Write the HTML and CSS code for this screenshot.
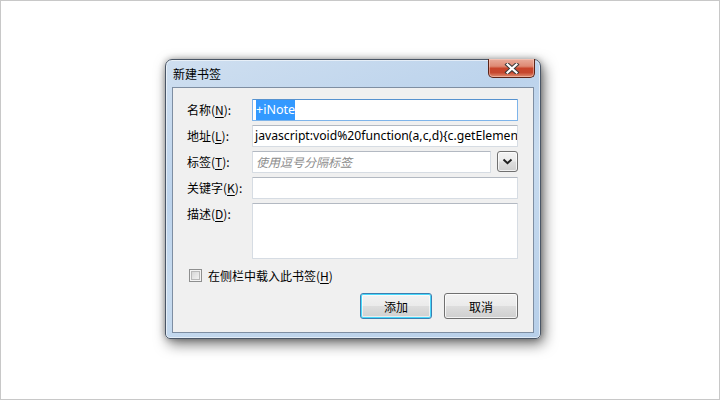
FILE: index.html
```html
<!DOCTYPE html>
<html>
<head>
<meta charset="utf-8">
<link rel="stylesheet" href="styles.css">
</head>
<body>
<div class="stage">
  <div class="window">
    <div class="titlebar">
      <span class="title">新建书签</span>
      <div class="close">
        <svg width="16" height="11" viewBox="0 0 16 11">
          <path d="M3.5 1.5 L12.5 9.5 M12.5 1.5 L3.5 9.5" stroke="#3a3a3a" stroke-width="4.2" stroke-linecap="square" fill="none"/>
          <path d="M3.5 1.5 L12.5 9.5 M12.5 1.5 L3.5 9.5" stroke="#ffffff" stroke-width="2.2" stroke-linecap="square" fill="none"/>
        </svg>
      </div>
    </div>
    <div class="client">
      <div class="form">
        <label class="lbl">名称(<u>N</u>):</label>
        <div class="field focus"><span class="sel">+iNote</span></div>
        <label class="lbl">地址(<u>L</u>):</label>
        <div class="field url">javascript:void%20function(a,c,d){c.getElemen</div>
        <label class="lbl">标签(<u>T</u>):</label>
        <div class="tagrow">
          <div class="field tags"><span class="ph">使用逗号分隔标签</span></div>
          <div class="drop">
            <svg width="11" height="7" viewBox="0 0 11 7"><path d="M1.5 1.5 L5.5 5.2 L9.5 1.5" stroke="#1e1e1e" stroke-width="2" fill="none"/></svg>
          </div>
        </div>
        <label class="lbl">关键字(<u>K</u>):</label>
        <div class="field"></div>
        <label class="lbl">描述(<u>D</u>):</label>
        <div class="field area"></div>
      </div>
      <div class="check">
        <span class="box"></span>
        <span class="clabel">在侧栏中载入此书签(<u>H</u>)</span>
      </div>
      <div class="buttons">
        <div class="btn default">添加</div>
        <div class="btn">取消</div>
      </div>
    </div>
  </div>
</div>
</body>
</html>
```
FILE: styles.css
```css
html, body {
  margin: 0;
  padding: 0;
}
body {
  width: 720px;
  height: 400px;
  box-sizing: border-box;
  border: 1px solid #c8c8c8;
  background: #ffffff;
  font-family: "Noto Sans CJK SC", "Noto Sans", sans-serif;
  font-size: 12px;
  color: #000;
  overflow: hidden;
}
.stage {
  padding-top: 58px;
  padding-left: 164px;
}
.window {
  width: 376px;
  height: 280px;
  box-sizing: border-box;
  border: 1px solid #4a5666;
  border-radius: 7px 7px 5px 5px;
  background: linear-gradient(160deg, #cfdff0 0%, #bcd3ec 35%, #c7dbef 55%, #b7cfe9 100%);
  box-shadow: 3px 5px 14px rgba(0,0,0,0.55), 0 0 6px rgba(0,0,0,0.3), inset 0 0 0 1px rgba(255,255,255,0.55);
  display: flex;
  flex-direction: column;
  padding: 0 6px 5px 6px;
}
.titlebar {
  height: 27px;
  display: flex;
  align-items: flex-start;
  justify-content: space-between;
}
.title {
  margin-top: 5px;
  margin-left: 1px;
  font-size: 12px;
  color: #000;
}
.close {
  width: 47px;
  height: 19px;
  box-sizing: border-box;
  margin-top: -1px;
  margin-right: -1px;
  border: 1px solid #5b2418;
  border-top: none;
  border-radius: 0 0 5px 5px;
  background: linear-gradient(to bottom, #e9ab9a 0%, #de8a74 40%, #c8452b 52%, #c6472e 75%, #e08f72 100%);
  box-shadow: inset 0 0 0 1px rgba(255,220,210,0.45);
  display: flex;
  align-items: center;
  justify-content: center;
}
.client {
  flex: 1;
  border: 1px solid #7e8ea2;
  background: #f0f0f0;
  padding: 11px 15px 0 13px;
  display: flex;
  flex-direction: column;
}
.form {
  display: grid;
  grid-template-columns: 66px 266px;
  grid-template-rows: 22px 22px 22px 22px 56px;
  row-gap: 4px;
}
.lbl {
  line-height: 22px;
  white-space: nowrap;
  margin-left: 1px;
}
u {
  text-decoration: underline;
  text-underline-offset: 2px;
}
.field {
  box-sizing: border-box;
  height: 100%;
  background: #ffffff;
  border: 1px solid #d6dce3;
  border-top-color: #b3b9c2;
  border-radius: 1px;
  padding: 0 3px;
  font-family: "Noto Sans", "Noto Sans CJK SC", sans-serif;
  font-size: 12px;
  line-height: 20px;
  white-space: nowrap;
  overflow: hidden;
}
.field.url {
  font-size: 12.2px;
  padding-left: 2px;
}
.field.focus {
  border-color: #7eb4ea;
  border-top-color: #5692cf;
}
.sel {
  background: #3399ff;
  color: #fff;
  padding: 1px 0 2px 0;
  font-size: 12.5px;
}
.tagrow {
  display: flex;
  gap: 6px;
}
.field.tags {
  width: 239px;
  flex: none;
}
.ph {
  color: #8c8c8c;
  font-style: italic;
  font-family: "Noto Sans CJK SC", sans-serif;
}
.drop {
  width: 21px;
  height: 21px;
  box-sizing: border-box;
  border: 1px solid #707070;
  border-radius: 3px;
  background: linear-gradient(to bottom, #f3f3f3 0%, #ebebeb 48%, #dddddd 52%, #cfcfcf 100%);
  box-shadow: inset 0 0 0 1px rgba(255,255,255,0.7);
  display: flex;
  align-items: center;
  justify-content: center;
}
.field.area {
  height: 56px;
}
.check {
  display: flex;
  align-items: center;
  margin-top: 9px;
  margin-left: 3px;
  height: 14px;
}
.box {
  width: 13px;
  height: 13px;
  box-sizing: border-box;
  border: 1px solid #8e8f8f;
  background: linear-gradient(135deg, #cfcfcf 0%, #e9e9e9 60%, #f8f8f8 100%);
  box-shadow: inset 0 0 0 1px #f4f4f4, inset 0 0 0 2px #b9b9b9;
}
.clabel {
  margin-left: 6px;
}
.buttons {
  display: flex;
  justify-content: flex-end;
  gap: 12px;
  margin-top: 11px;
}
.btn {
  width: 74px;
  height: 26px;
  box-sizing: border-box;
  border: 1px solid #707070;
  border-radius: 3px;
  background: linear-gradient(to bottom, #f2f2f2 0%, #ebebeb 48%, #dddddd 52%, #cfcfcf 100%);
  box-shadow: inset 0 0 0 1px rgba(255,255,255,0.75);
  display: flex;
  align-items: center;
  justify-content: center;
  font-size: 12px;
}
.btn.default {
  width: 72px;
  border-color: #3c7fb1;
  box-shadow: inset 0 0 0 1px #48d8fb, inset 0 0 0 2px rgba(255,255,255,0.6);
}
```
